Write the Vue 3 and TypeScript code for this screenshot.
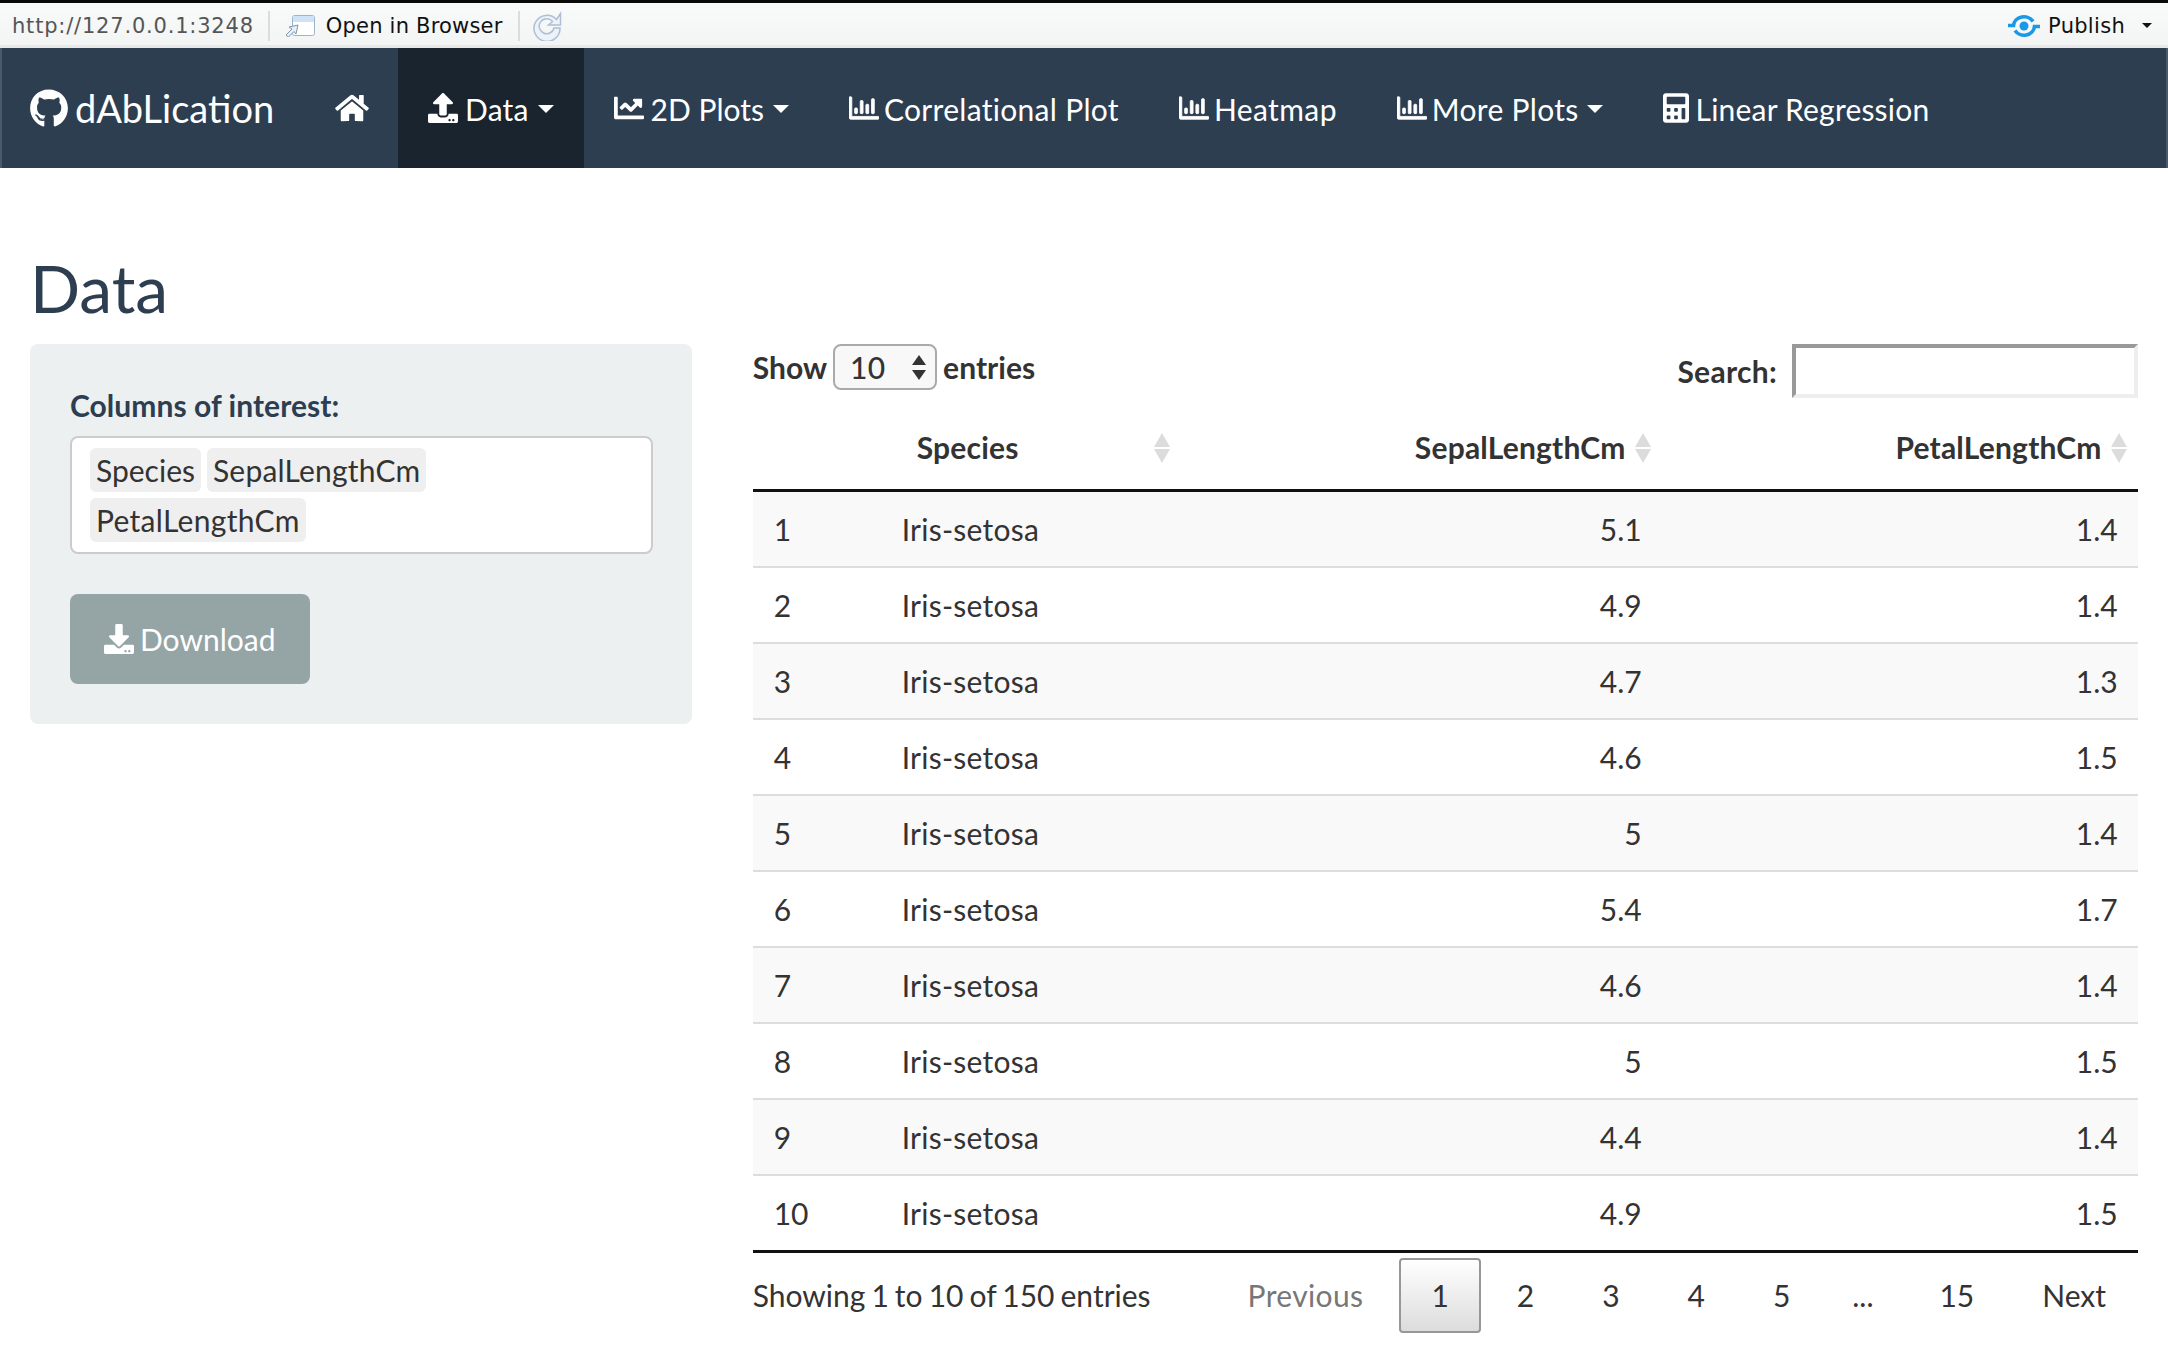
<script setup lang="ts">
interface Row { n: number; s: string; a: string; b: string }
const values: [string, string][] = [['5.1','1.4'],['4.9','1.4'],['4.7','1.3'],['4.6','1.5'],['5','1.4'],['5.4','1.7'],['4.6','1.4'],['5','1.5'],['4.4','1.4'],['4.9','1.5']]
const rows: Row[] = values.map((v, i) => ({ n: i + 1, s: 'Iris-setosa', a: v[0], b: v[1] }))
const barPath = 'M396.8 352h22.4c6.4 0 12.8-6.4 12.8-12.8V108.8c0-6.4-6.4-12.8-12.8-12.8h-22.4c-6.4 0-12.8 6.4-12.8 12.8v230.4c0 6.4 6.4 12.8 12.8 12.8zm-192 0h22.4c6.4 0 12.8-6.4 12.8-12.8V140.8c0-6.4-6.4-12.8-12.8-12.8h-22.4c-6.4 0-12.8 6.4-12.8 12.8v198.4c0 6.4 6.4 12.8 12.8 12.8zm96 0h22.4c6.4 0 12.8-6.4 12.8-12.8V204.8c0-6.4-6.4-12.8-12.8-12.8h-22.4c-6.4 0-12.8 6.4-12.8 12.8v134.4c0 6.4 6.4 12.8 12.8 12.8zM496 400H48V80c0-8.84-7.16-16-16-16H16C7.16 64 0 71.16 0 80v336c0 17.67 14.33 32 32 32h464c8.84 0 16-7.16 16-16v-16c0-8.84-7.16-16-16-16zm-387.2-48h22.4c6.4 0 12.8-6.4 12.8-12.8v-70.4c0-6.4-6.4-12.8-12.8-12.8h-22.4c-6.4 0-12.8 6.4-12.8 12.8v70.4c0 6.4 6.4 12.8 12.8 12.8z'
const linePath = 'M496 384H64V80c0-8.84-7.16-16-16-16H16C7.16 64 0 71.16 0 80v336c0 17.67 14.33 32 32 32h464c8.84 0 16-7.16 16-16v-32c0-8.84-7.16-16-16-16zM464 96H345.94c-21.38 0-32.09 25.85-16.97 40.97l32.4 32.4L288 242.75l-73.37-73.37c-12.5-12.5-32.76-12.5-45.25 0l-68.69 68.69c-6.25 6.25-6.25 16.38 0 22.63l22.62 22.62c6.25 6.25 16.38 6.25 22.63 0L192 237.25l73.37 73.37c12.5 12.5 32.76 12.5 45.25 0l96-96 32.4 32.4c15.12 15.12 40.97 4.41 40.97-16.97V112c0-8.84-7.16-16-16-16z'
const uploadPath = 'M296 384h-80c-13.3 0-24-10.7-24-24V192h-87.7c-17.8 0-26.7-21.5-14.1-34.1L242.3 5.7c7.5-7.5 19.8-7.5 27.3 0l152.2 152.2c12.6 12.6 3.7 34.1-14.1 34.1H320v168c0 13.3-10.7 24-24 24zm216-8v112c0 13.3-10.7 24-24 24H24c-13.3 0-24-10.7-24-24V376c0-13.3 10.7-24 24-24h136v8c0 30.9 25.1 56 56 56h80c30.9 0 56-25.1 56-56v-8h136c13.3 0 24 10.7 24 24zm-124 88c0-11-9-20-20-20s-20 9-20 20 9 20 20 20 20-9 20-20zm64 0c0-11-9-20-20-20s-20 9-20 20 9 20 20 20 20-9 20-20z'
const downloadPath = 'M216 0h80c13.3 0 24 10.7 24 24v168h87.7c17.8 0 26.7 21.5 14.1 34.1L269.7 378.3c-7.5 7.5-19.8 7.5-27.3 0L90.1 226.1c-12.6-12.6-3.7-34.1 14.1-34.1H192V24c0-13.3 10.7-24 24-24zm296 376v112c0 13.3-10.7 24-24 24H24c-13.3 0-24-10.7-24-24V376c0-13.3 10.7-24 24-24h146.7l49 49c20.1 20.1 52.5 20.1 72.6 0l49-49H488c13.3 0 24 10.7 24 24zm-124 88c0-11-9-20-20-20s-20 9-20 20 9 20 20 20 20-9 20-20zm64 0c0-11-9-20-20-20s-20 9-20 20 9 20 20 20 20-9 20-20z'
const homePath = 'M280.37 148.26L96 300.11V464a16 16 0 0 0 16 16l112.06-.29a16 16 0 0 0 15.92-16V368a16 16 0 0 1 16-16h64a16 16 0 0 1 16 16v95.64a16 16 0 0 0 16 16.05L464 480a16 16 0 0 0 16-16V300L295.67 148.26a12.19 12.19 0 0 0-15.3 0zM571.6 251.47L488 182.56V44.05a12 12 0 0 0-12-12h-56a12 12 0 0 0-12 12v72.61L318.47 43a48 48 0 0 0-61 0L4.34 251.47a12 12 0 0 0-1.6 16.9l25.5 31A12 12 0 0 0 45.15 301l235.22-193.74a12.19 12.19 0 0 1 15.3 0L530.9 301a12 12 0 0 0 16.9-1.6l25.5-31a12 12 0 0 0-1.7-16.93z'
const githubPath = 'M165.9 397.4c0 2-2.3 3.6-5.2 3.6-3.3 0-5.6-1.6-5.6-3.6 0-2 2.3-3.6 5.2-3.6 3-.3 5.6 1.3 5.6 3.6zm-31.1-4.5c-.7 2 1.3 4.3 4.3 4.9 2.6 1 5.6 0 6.2-2s-1.3-4.3-4.3-5c-2.6-.7-5.5.3-6.2 2.1zm44.2-1.7c-2.9.7-4.9 2.6-4.6 4.9.3 2 2.9 3.3 5.9 2.6 2.9-.7 4.9-2.6 4.6-4.6-.3-1.9-3-3.2-5.9-2.9zM244.8 8C106.1 8 0 113.3 0 252c0 110.9 69.8 205.8 169.5 239.2 12.8 2.3 17.3-5.6 17.3-12.1 0-6.2-.3-40.4-.3-61.4 0 0-70 15-84.7-29.8 0 0-11.4-29.1-27.8-36.6 0 0-22.9-15.7 1.6-15.4 0 0 24.9 2 38.6 25.8 21.9 38.6 58.6 27.5 72.9 20.9 2.3-16 8.8-27.1 16-33.7-55.9-6.2-112.3-14.3-112.3-110.5 0-27.5 7.6-41.3 23.6-58.9-2.6-6.5-11.1-33.3 2.6-67.9 20.9-6.5 69 27 69 27 20-5.6 41.5-8.5 62.8-8.5s42.8 2.9 62.8 8.5c0 0 48.1-33.6 69-27 13.7 34.7 5.2 61.4 2.6 67.9 16 17.7 25.8 31.5 25.8 58.9 0 96.5-58.9 104.2-114.8 110.5 9.2 7.9 17 22.9 17 46.4 0 33.7-.3 75.4-.3 83.6 0 6.5 4.6 14.4 17.3 12.1C428.2 457.8 496 362.9 496 252 496 113.3 383.5 8 244.8 8z'
const calcPath = 'M400 0H48C22.4 0 0 22.4 0 48v416c0 25.6 22.4 48 48 48h352c25.6 0 48-22.4 48-48V48c0-25.6-22.4-48-48-48zM128 435c0 6.4-6.4 12.8-12.8 12.8H76.8c-6.4 0-12.8-6.4-12.8-12.8v-38.4c0-6.4 6.4-12.8 12.8-12.8h38.4c6.4 0 12.8 6.4 12.8 12.8V435zm0-128c0 6.4-6.4 12.8-12.8 12.8H76.8c-6.4 0-12.8-6.4-12.8-12.8v-38.4c0-6.4 6.4-12.8 12.8-12.8h38.4c6.4 0 12.8 6.4 12.8 12.8V307zm128 128c0 6.4-6.4 12.8-12.8 12.8h-38.4c-6.4 0-12.8-6.4-12.8-12.8v-38.4c0-6.4 6.4-12.8 12.8-12.8h38.4c6.4 0 12.8 6.4 12.8 12.8V435zm0-128c0 6.4-6.4 12.8-12.8 12.8h-38.4c-6.4 0-12.8-6.4-12.8-12.8v-38.4c0-6.4 6.4-12.8 12.8-12.8h38.4c6.4 0 12.8 6.4 12.8 12.8V307zm128 128c0 6.4-6.4 12.8-12.8 12.8h-38.4c-6.4 0-12.8-6.4-12.8-12.8V268.8c0-6.4 6.4-12.8 12.8-12.8h38.4c6.4 0 12.8 6.4 12.8 12.8V435zm0-256c0 6.4-6.4 12.8-12.8 12.8H76.8c-6.4 0-12.8-6.4-12.8-12.8V76.8C64 70.4 70.4 64 76.8 64h294.4c6.4 0 12.8 6.4 12.8 12.8V179z'
interface NavItem { label: string; path: string; caret: boolean; cls: string; vb?: string; bar?: boolean }
const navItems: NavItem[] = [
  { label: 'Data', path: uploadPath, caret: true, cls: 'active' },
  { label: '2D Plots', path: linePath, caret: true, cls: 'tight' },
  { label: 'Correlational Plot', path: barPath, caret: false, bar: true, cls: 'wide' },
  { label: 'Heatmap', path: barPath, caret: false, bar: true, cls: 'wider' },
  { label: 'More Plots', path: barPath, caret: true, bar: true, cls: 'wide more' },
  { label: 'Linear Regression', path: calcPath, caret: false, vb: '0 0 448 512', cls: '' }
]
const pages = ['2', '3', '4', '5']
</script>

<template>
  <div class="page">
    <div class="topbar">
      <span class="url">http://127.0.0.1:3248</span>
      <span class="sep"></span>
      <svg class="open-ico" viewBox="0 0 30 22" width="30" height="22">
        <rect x="7.5" y="0.5" width="22" height="20" rx="2" fill="#fff" stroke="#9db4cf"/>
        <rect x="8" y="1" width="21" height="6" fill="#cfe3f7"/>
        <path d="M1 20 L7 14 L4 12 L13 10 L11 19 L9 16.5 L3.5 22 Z" fill="#e8eef5" stroke="#7f97b2"/>
      </svg>
      <span class="open">Open in Browser</span>
      <span class="sep sep2"></span>
      <svg class="refresh" viewBox="0 0 30 30" width="30" height="30">
        <path d="M24.500 8.500 A13 13 0 1 0 28 17 L22 17 A7.500 7.500 0 1 1 20.500 10.500 L16.500 14 L28.500 14 L28.500 2.500 Z" fill="#edf2f9" stroke="#aebfd4" stroke-width="1.500"/>
      </svg>
      <span class="spacer"></span>
      <svg class="pub-ico" viewBox="0 0 32 24" width="32" height="24">
        <g fill="none" stroke="#1a9ae6" stroke-width="3.600">
          <path d="M0 11.500 H5.500 A10.500 9.500 0 0 1 25 7.500"/>
          <path d="M32 12.500 H26.500 A10.500 9.500 0 0 1 7 16.500"/>
        </g>
        <circle cx="16" cy="12" r="4.500" fill="#1a9ae6"/>
      </svg>
      <span class="publish">Publish</span>
      <span class="pub-caret"></span>
    </div>

    <nav class="navbar">
      <a class="brand">
        <svg class="brand-ico" viewBox="0 0 496 512" width="38" height="39"><path :d="githubPath" fill="#fff"/></svg>
        <span>dAbLication</span>
      </a>
      <a class="nav-item home">
        <svg viewBox="0 0 576 512" width="34" height="30"><path :d="homePath" fill="#fff"/></svg>
      </a>
      <a v-for="item in navItems" :key="item.label" class="nav-item" :class="[item.cls, { bar: item.bar }]">
        <svg :viewBox="item.vb || '0 0 512 512'" :width="item.vb ? 26 : 30" height="30"><path :d="item.path" fill="#fff" :stroke="item.bar ? '#fff' : 'none'" :stroke-width="item.bar ? 14 : 0"/></svg>
        <span class="nav-label">{{ item.label }}</span>
        <span v-if="item.caret" class="caret"></span>
      </a>
    </nav>

    <main class="main">
      <h2 class="title">Data</h2>
      <div class="cols">
        <div class="side">
          <div class="well">
            <div class="label">Columns of interest:</div>
            <div class="multi">
              <span class="tag first">Species</span>
              <span class="tag">SepalLengthCm</span>
              <span class="tag last">PetalLengthCm</span>
            </div>
            <a class="btn">
              <svg viewBox="0 0 512 512" width="30" height="30"><path :d="downloadPath" fill="#fff"/></svg>
              <span>Download</span>
            </a>
          </div>
        </div>

        <div class="content">
          <div class="controls">
            <div class="length">
              <span>Show</span>
              <div class="select">
                <span>10</span>
                <span class="arrows"><i class="up"></i><i class="down"></i></span>
              </div>
              <span>entries</span>
            </div>
            <div class="search">
              <span>Search:</span>
              <input class="search-input" type="text" />
            </div>
          </div>

          <table class="table">
            <colgroup>
              <col class="c1" /><col class="c2" /><col class="c3" /><col class="c4" />
            </colgroup>
            <thead>
              <tr>
                <th></th>
                <th class="th-left">Species<span class="sort sort-left"><i class="up"></i><i class="down"></i></span></th>
                <th class="th-right">SepalLengthCm<span class="sort"><i class="up"></i><i class="down"></i></span></th>
                <th class="th-right">PetalLengthCm<span class="sort"><i class="up"></i><i class="down"></i></span></th>
              </tr>
            </thead>
            <tbody>
              <tr v-for="r in rows" :key="r.n">
                <td>{{ r.n }}</td>
                <td class="sp">{{ r.s }}</td>
                <td class="num">{{ r.a }}</td>
                <td class="num">{{ r.b }}</td>
              </tr>
            </tbody>
          </table>

          <div class="footer">
            <div class="info">Showing 1 to 10 of 150 entries</div>
            <div class="pager">
              <a class="pg prev">Previous</a>
              <a class="pg current">1</a>
              <a v-for="p in pages" :key="p" class="pg">{{ p }}</a>
              <span class="dots">...</span>
              <a class="pg">15</a>
              <a class="pg">Next</a>
            </div>
          </div>
        </div>
      </div>
    </main>
  </div>
</template>

<style>
html, body { margin: 0; background: #fff; }
</style>

<style scoped>
.page { width: 2168px; height: 1356px; overflow: hidden; font-family: Lato, "Open Sans", sans-serif; font-size: 30px; color: #333; line-height: 43px; background: #fff; }
.topbar { box-sizing: border-box; height: 48px; padding-top: 3px; border-top: 3px solid #0a0a0a; border-bottom: 3px solid #e8e8e8; background: linear-gradient(#f9fafa, #f3f4f4); display: flex; align-items: center; font-family: "DejaVu Sans", sans-serif; font-size: 21px; line-height: 24px; }
.url { margin-left: 12px; color: #555; letter-spacing: 0.8px; }
.sep { width: 2px; height: 30px; background: #dcdcdc; margin-left: 14px; }
.sep2 { margin-left: 15px; }
.open-ico { margin-left: 15px; }
.open { margin-left: 11px; color: #111; letter-spacing: 0.2px; }
.refresh { margin-left: 12px; }
.spacer { flex: 1; }
.pub-ico { margin-right: -1px; }
.publish { margin-left: 9px; color: #111; letter-spacing: 0.3px; }
.pub-caret { width: 0; height: 0; border-left: 5.5px solid transparent; border-right: 5.5px solid transparent; border-top: 5.5px solid #111; margin-left: 17px; margin-right: 16px; }

.navbar { height: 120px; background: #2c3e50; display: flex; align-items: stretch; color: #fff; box-shadow: inset 2px 0 0 #4a5a6b, inset -2px 0 0 #4a5a6b; }
.brand { display: flex; align-items: center; gap: 7px; padding-left: 30px; font-size: 38px; width: 305px; box-sizing: border-box; }
.brand-ico { flex: none; }
.nav-item { display: flex; align-items: center; gap: 7px; padding: 0 30px; letter-spacing: 0.2px; }
.nav-item.bar { gap: 5px; }
.nav-item.tight { letter-spacing: 0; }
.nav-item.wide { letter-spacing: 0.3px; }
.nav-item.wider { letter-spacing: 0.4px; }
.nav-label { margin-top: 2px; }
.home { width: 93px; box-sizing: border-box; padding: 0 0 0 30px; }
.nav-item.active { background: #1a242f; }
.caret { width: 0; height: 0; border-left: 8px solid transparent; border-right: 8px solid transparent; border-top: 8px solid #fff; margin-left: 2px; margin-top: 2px; }
.more .caret { margin-left: 3px; }

.main { padding: 0; }
.title { margin: 0; padding: 85px 30px 21px; font-size: 66px; line-height: 70px; font-weight: 400; color: #2c3e50; }
.cols { display: grid; grid-template-columns: 1fr 2fr; }
.side { padding: 0 31px 0 30px; }
.well { background: #ecf0f1; border-radius: 8px; padding: 40px 39px 40px 40px; }
.label { font-weight: 700; color: #2c3e50; margin-bottom: 9px; letter-spacing: 0.05px; }
.multi { box-sizing: border-box; height: 118px; background: #fff; border: 2px solid #ccc; border-radius: 8px; padding: 10px 18px; display: flex; flex-wrap: wrap; align-content: flex-start; gap: 6px; }
.tag { height: 44px; line-height: 44px; padding: 0 6px; border-radius: 6px; background: #efefef; color: #333; letter-spacing: 0.2px; }
.tag.first { letter-spacing: 0; }
.tag.last { letter-spacing: 0.3px; }
.btn { margin-top: 40px; width: 240px; height: 90px; box-sizing: border-box; padding-left: 34px; background: #95a5a6; border-radius: 8px; display: flex; align-items: center; gap: 6px; color: #fff; }

.content { padding: 0 30px; min-width: 0; }
.controls { display: flex; justify-content: space-between; align-items: flex-start; height: 54px; font-weight: 700; }
.length { display: flex; align-items: center; gap: 6px; height: 46px; letter-spacing: 0.05px; }
.select { box-sizing: border-box; width: 104px; height: 46px; border: 2px solid #aaa; border-radius: 8px; background: #f8f8f8; display: flex; align-items: center; justify-content: space-between; padding: 0 9px 0 15px; font-weight: 500; letter-spacing: 0.3px; }
.arrows { display: flex; flex-direction: column; gap: 5px; }
.arrows .up { width: 0; height: 0; border-left: 7px solid transparent; border-right: 7px solid transparent; border-bottom: 10px solid #333; }
.arrows .down { width: 0; height: 0; border-left: 7px solid transparent; border-right: 7px solid transparent; border-top: 10px solid #333; }
.search { display: flex; align-items: center; gap: 15px; height: 54px; letter-spacing: 0.3px; }
.search-input { box-sizing: border-box; width: 346px; height: 54px; border: 4px solid #eee; border-top-color: #999; border-left-color: #999; background: #fff; padding: 0; margin: 0; outline: none; }

.table { width: 1385px; table-layout: fixed; border-collapse: separate; border-spacing: 0; }
.c1 { width: 127px; }
.c2 { width: 299px; }
.c3 { width: 483px; }
.c4 { width: 476px; }
th { box-sizing: border-box; position: relative; height: 94px; border-bottom: 3px solid #111; font-weight: 700; padding: 8px 0 0; letter-spacing: 0.2px; }
.th-left { text-align: left; padding-left: 37px; }
.th-right { text-align: right; padding-right: 36px; }
.sort { position: absolute; right: 11px; top: 35px; display: flex; flex-direction: column; gap: 2px; }
.sort-left { right: 9px; }
.sort .up { width: 0; height: 0; border-left: 8.5px solid transparent; border-right: 8.5px solid transparent; border-bottom: 14px solid #dcdcdc; }
.sort .down { width: 0; height: 0; border-left: 8.5px solid transparent; border-right: 8.5px solid transparent; border-top: 14px solid #dcdcdc; }
td { box-sizing: border-box; height: 76px; padding: 0 20px 0 21px; border-bottom: 2px solid #ddd; color: #333; }
td.sp { letter-spacing: 0.25px; padding-left: 22px; }
tbody tr:nth-child(odd) td { background: #f9f9f9; }
tbody tr:last-child td { height: 77px; border-bottom: 3px solid #111; background: #fff; }
.num { text-align: right; }

.footer { display: flex; justify-content: space-between; align-items: flex-start; padding-top: 5px; }
.info { padding-top: 16px; word-spacing: -1.6px; }
.pager { display: flex; align-items: center; }
.pg { box-sizing: border-box; height: 75px; line-height: 71px; padding: 0 30px; margin-left: 4px; border: 2px solid transparent; border-radius: 4px; color: #333; }
.prev { color: #777; letter-spacing: 0.35px; }
.current { border-color: #979797; background: linear-gradient(#fff, #dcdcdc); }
.dots { width: 81px; text-align: center; }
</style>
